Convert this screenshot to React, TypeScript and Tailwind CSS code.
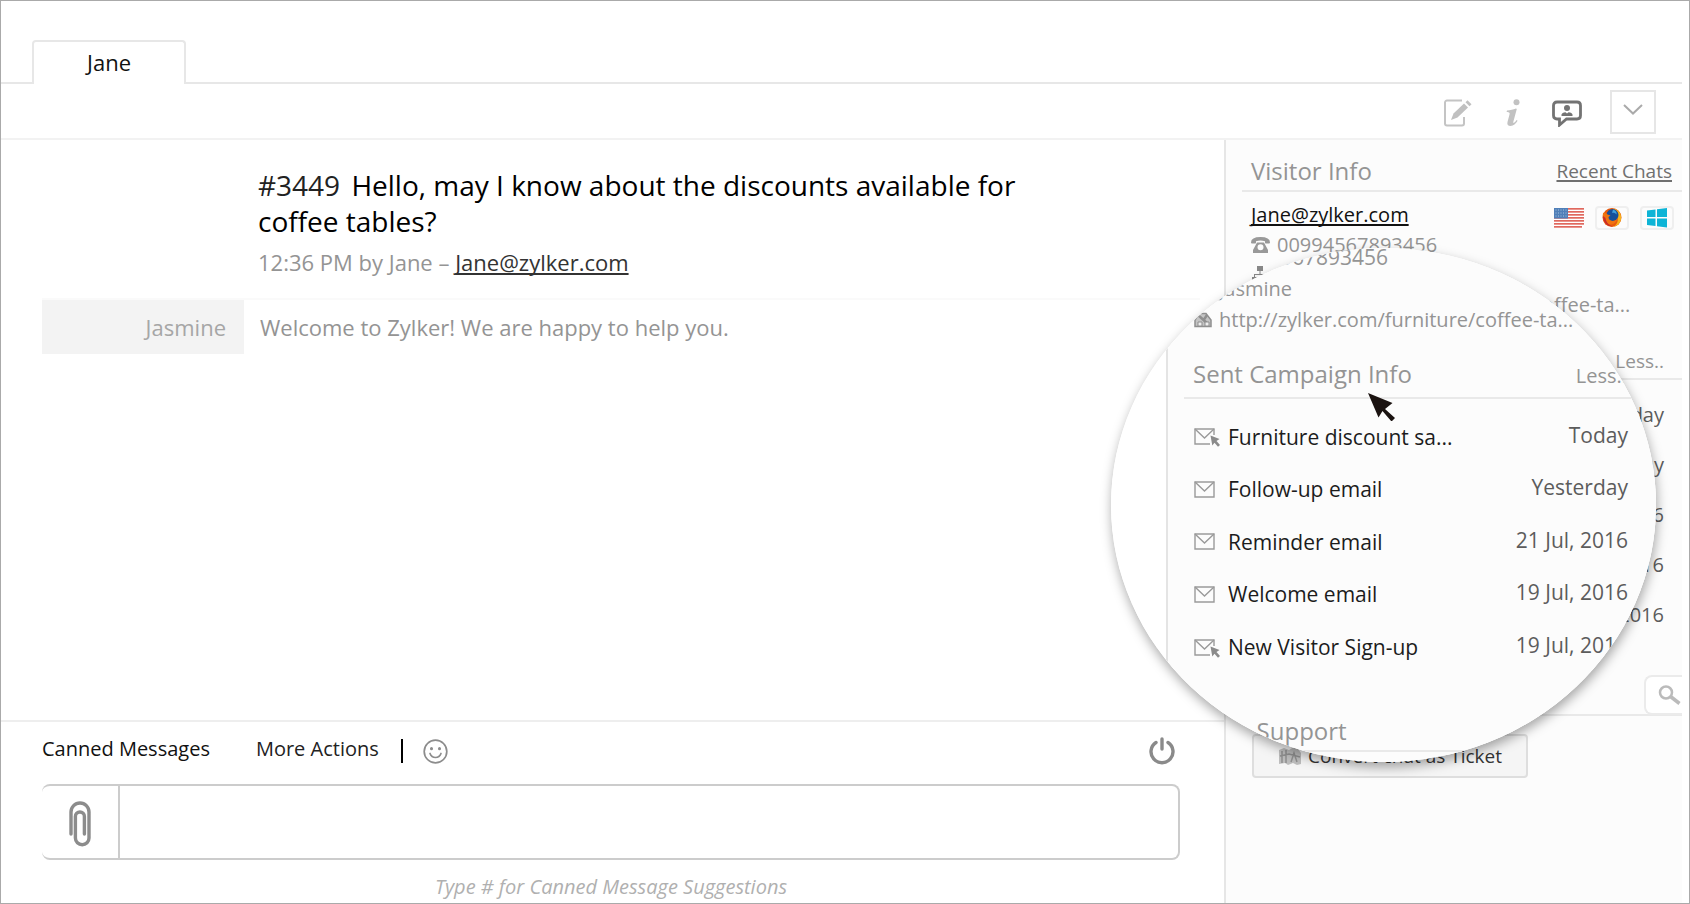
import type { ReactNode } from 'react';

const campaigns = [
    { name: 'Furniture discount sa...', date: 'Today', clicked: true },
    { name: 'Follow-up email', date: 'Yesterday', clicked: false },
    { name: 'Reminder email', date: '21 Jul, 2016', clicked: false },
    { name: 'Welcome email', date: '19 Jul, 2016', clicked: false },
    { name: 'New Visitor Sign-up', date: '19 Jul, 2016', clicked: true },
];

/* ---------- Icons ---------- */

function EditIcon() {
    return (
        <svg width="28" height="28" viewBox="0 0 28 28" fill="none">
            <path d="M18 1.5H3a2 2 0 0 0-2 2v21a2 2 0 0 0 2 2h15a2 2 0 0 0 2-2V18" stroke="#c4c4c4" strokeWidth="2" />
            <path d="M7 21l2.5-6.5L20 4.5l4 4L13.500 18.500z" fill="#c0c0c0" />
            <path d="M21.500 3.200l2-2 4 4-2 2z" fill="#c0c0c0" />
        </svg>
    );
}

function InfoIcon() {
    return (
        <svg width="16" height="28" viewBox="0 0 16 28" fill="#c2c2c2">
            <circle cx="11.500" cy="3.300" r="3" />
            <path d="M2 11.500c3.500-.3 6-1 9-2l.8.5-3.400 12.500c-.4 1.400.2 1.700 1 1.100.8-.6 1.500-1.500 2.200-2.500l1 .7C10.800 24.800 8.500 27 5.500 27c-2.400 0-3.700-1.500-3-4l2-7.500c.4-1.600.2-2.300-2.900-2.500z" />
        </svg>
    );
}

function ChatUserIcon() {
    return (
        <svg width="30" height="28" viewBox="0 0 30 28" fill="none">
            <path d="M5 3h20q3.500 0 3.500 3.500v10q0 3.500-3.500 3.500H14.500L7.500 26V20H5q-3.500 0-3.500-3.500v-10Q1.500 3 5 3z" stroke="#737373" strokeWidth="2.800" />
            <circle cx="15" cy="9" r="3" fill="#737373" />
            <path d="M9.500 17v-1.500q.5-2 4-2.300l1.500 1.400 1.500-1.400q3.500.3 4 2.300v1.500z" fill="#737373" />
        </svg>
    );
}

function PhoneIcon() {
    return (
        <svg width="19" height="16" viewBox="0 0 19 16" fill="#999">
            <path d="M0 5.500Q0 0 9.500 0T19 5.500q0 1-1 1h-3.200q-.8 0-.8-1V4.200Q9.500 2.700 5 4.200v1.300q0 1-.8 1H1q-1 0-1-1z" />
            <path fillRule="evenodd" d="M6 5.500h7l4 7.500v3H2v-3zM9.500 7.300a3 3 0 1 0 0 6 3 3 0 0 0 0-6z" />
        </svg>
    );
}

function AgentIcon() {
    return (
        <svg width="18" height="18" viewBox="0 0 18 18" fill="#888">
            <path d="M6 0h6v5H6zM8.500 5h1v3h5.500v3h-1V9H4v2H3V8h5.500zM1 11h5v5H1zM12 11h5v5h-5z" />
        </svg>
    );
}

function PageIcon() {
    return (
        <svg width="18" height="16" viewBox="0 0 18 16" fill="none" stroke="#8f8f8f">
            <path d="M1 14.500V8L5 1.500h7L17 8v6.500z" fill="#c4c4c4" strokeWidth="1.500" />
            <path d="M4 3l10 9M13 3l-4 6" strokeWidth="2.500" />
            <path d="M4 10h4v4H4zM11 10h4v4h-4z" fill="#eee" />
        </svg>
    );
}

function EnvelopeIcon({ clicked }: { clicked: boolean }) {
    return (
        <svg width="27" height="20" viewBox="0 0 27 20" fill="none">
            <path d={clicked ? 'M16 17H1V2h19v6' : 'M1 2h19v15H1z'} stroke="#9a9a9a" strokeWidth="1.400" />
            <path d="M1 2l9.500 9L20 2" stroke="#9a9a9a" strokeWidth="1.400" />
            {clicked && <path d="M16.500 8.500l9 3.500-3 2 3.500 4-2 1.800-3.500-4-2.200 2.700z" fill="#8b8b8b" />}
        </svg>
    );
}

function FlagIcon() {
    return (
        <svg width="30" height="20" viewBox="0 0 30 20">
            <rect width="30" height="20" rx="2" fill="#fff" />
            {[0, 3, 6, 9, 12, 15, 18].map((y) => (
                <rect key={y} y={y} width={y === 18 ? 28 : 30} height="1.700" fill="#e0685e" />
            ))}
            <rect width="14" height="10.500" fill="#4f7fb8" />
            {[2, 5, 8].map((y) => (
                <path key={y} d={`M1.500 ${y}h11`} stroke="#a9c3df" strokeWidth="1" strokeDasharray="1 1.500" />
            ))}
        </svg>
    );
}

function FirefoxIcon() {
    return (
        <svg width="20" height="20" viewBox="0 0 20 20">
            <circle cx="10" cy="9.500" r="9.500" fill="#e8590c" />
            <path d="M12 0.500c5 1.500 8 6 7 11-1 4.500-4.500 7-8 7.500 4-2 5.500-6 4.500-10z" fill="#f6b21b" />
            <circle cx="10.500" cy="7" r="6" fill="#14509b" />
            <path d="M11 1.500c3 1 4 3 3.500 5-1-1.500-3-2-4.500-1.500z" fill="#3fa0dd" />
            <path d="M1 5c1.500-.5 3.500 0 4.500 1.500l3 1-2 1.500c0 2.500 2 4 4.500 4 2 0 3.500-1 4-2.500-.3 4-3.500 6-6.500 6-5 0-8.500-5-7.500-11.500z" fill="#f0730f" />
            <path d="M1 8c0 6 4 10.500 9.500 10.500C6 17 4 13.500 3.500 10z" fill="#c92a2a" />
        </svg>
    );
}

function WindowsIcon() {
    return (
        <svg width="20" height="20" viewBox="0 0 20 20" fill="#0db4d6">
            <path d="M0 2.500L8.500 1.500V9H0zM10 1.200L20 0v9H10zM0 10.500h8.500V18L0 17zM10 10.500h10V19.500L10 18.200z" />
        </svg>
    );
}

function SmileyIcon() {
    return (
        <svg width="25" height="25" viewBox="0 0 25 25" fill="none" stroke="#8c8c8c" strokeLinecap="round">
            <circle cx="12.500" cy="12.500" r="11.300" strokeWidth="1.700" />
            <path d="M7 14.500q1.500 4 5.500 4t5.500-4" strokeWidth="1.700" />
            <path d="M8.500 9.500v.2M16.500 9.500v.2" strokeWidth="3" />
        </svg>
    );
}

function PowerIcon() {
    return (
        <svg width="28" height="28" viewBox="0 0 28 28" fill="none" stroke="#8a8a8a" strokeWidth="3.400" strokeLinecap="round">
            <path d="M14 2v10" />
            <path d="M8 5.500a11 11 0 1 0 12 0" />
        </svg>
    );
}

function PaperclipIcon() {
    return (
        <svg width="22" height="46" viewBox="0 0 22 46" fill="none" stroke="#8c8c8c" strokeWidth="3.400" strokeLinecap="round">
            <path d="M2 33V11a9 9 0 0 1 18 0v26a6.800 6.800 0 0 1-13.600 0V15.500a4.500 4.500 0 0 1 9 0V33" />
        </svg>
    );
}

function TicketIcon() {
    return (
        <svg width="24" height="20" viewBox="0 0 24 20">
            <path d="M1 4l5-2 5 2 5-3 4 2 3 4v11l-4 1-4-2-5 2-3-2-6 1z" fill="#bdbdbd" />
            <path d="M4 5v12M8 4v13M13 16l3-9 3 9M2 10l9-2 11 3" stroke="#8f8f8f" strokeWidth="1.500" fill="none" />
        </svg>
    );
}

/* ---------- Shared pieces ---------- */

function SectionHeader({ title, children }: { title?: string; children?: ReactNode }) {
    return (
        <div className="flex h-[52px] items-center border-b-2 border-[#e9e9e9] pl-[9px] pt-3">
            {title && <h2 className="whitespace-nowrap text-[24px] leading-8 text-[#949494]">{title}</h2>}
            {children}
        </div>
    );
}

function VisitorDetails() {
    return (
        <>
            <p className="flex items-center gap-[7px]"><PhoneIcon />00994567893456</p>
            <p className="flex items-center gap-[7px]"><AgentIcon />Jasmine</p>
            <p className="flex items-center gap-[7px] whitespace-nowrap"><PageIcon />http://zylker.com/furniture/coffee-ta...</p>
        </>
    );
}

/* Magnified part of the sidebar */
function Lens() {
    return (
        <div className="absolute right-[33px] top-[247px] flex h-[514px] w-[545px] overflow-hidden rounded-[50%] bg-white">
            <div className="ml-[55px] flex-1 border-l-2 border-[#e4e4e4] bg-[#fcfcfc] pl-4">
                <div className="-mt-[6px] pl-[10px] text-[20px] leading-[31px] text-[#949494] [&>p:first-child]:text-[21px]">
                    <VisitorDetails />
                </div>
                {/* Header sits a bit higher above its rule than in the sidebar */}
                <div className="mt-2 border-b-2 border-[#e9e9e9] pb-[7px] pl-[9px] pt-[15px]">
                    <div className="flex items-center text-[#949494]">
                        <h2 className="whitespace-nowrap text-[24px] leading-8">Sent Campaign Info</h2>
                        <a href="#less" className="ml-auto pr-[29px] pt-1 text-[20px] leading-6">Less..</a>
                    </div>
                </div>
                <ul className="mt-3 flex h-[263px] flex-col pl-[10px] pr-[28px]">
                    {campaigns.map((c) => (
                        <li key={c.name} className="flex flex-1 items-center text-[21px]">
                            <span className="w-[34px]"><EnvelopeIcon clicked={c.clicked} /></span>
                            <span className="flex-1 text-[#1c1c1c]">{c.name}</span>
                            <span className="pb-1 text-[#5c5c5c]">{c.date}</span>
                        </li>
                    ))}
                </ul>
                <div className="mt-[26px]">
                    <SectionHeader title="Zoho Support" />
                </div>
            </div>
        </div>
    );
}

function Sidebar() {
    return (
        <aside className="w-[458px] shrink-0 border-l-2 border-[#e6e6e6] bg-[#fcfcfc] pl-4">
            <SectionHeader title="Visitor Info">
                <a href="#recent" className="ml-auto pr-[10px] text-[19px] text-[#707070] underline decoration-2 underline-offset-2 [text-decoration-skip-ink:none]">Recent Chats</a>
            </SectionHeader>
            <div className="mt-2 flex items-start justify-between pl-[9px] pr-2">
                <div className="text-[20px] leading-[30px] text-[#949494]">
                    <a href="mailto:Jane@zylker.com" className="text-[#111] underline decoration-2 underline-offset-2 [text-decoration-skip-ink:none]">Jane@zylker.com</a>
                    <VisitorDetails />
                </div>
                <div className="-ml-[200px] mt-[6px] flex items-center gap-[11px]">
                    <FlagIcon />
                    <span className="flex h-6 w-[34px] items-center justify-center rounded border-2 border-[#efefef]"><FirefoxIcon /></span>
                    <span className="flex h-6 w-[34px] items-center justify-center rounded border-2 border-[#efefef]"><WindowsIcon /></span>
                </div>
            </div>
            <div className="mt-2">
                <SectionHeader>
                    <a href="#less" className="ml-auto pr-[18px] pt-1 text-[19px] text-[#949494]">Less..</a>
                </SectionHeader>
            </div>
            <ul className="mt-[10px] pr-[18px] text-right text-[20px] leading-[50px] text-[#5c5c5c]">
                {campaigns.map((c) => (
                    <li key={c.name}>{c.date}</li>
                ))}
            </ul>
            <div className="mt-6">
                <SectionHeader>
                    <button aria-label="Search" className="ml-auto flex h-10 w-[38px] items-center rounded-l-lg border-2 border-r-0 border-[#ebebeb] bg-white pl-3">
                        <svg width="24" height="20" viewBox="0 0 24 20" fill="none" stroke="#bbb">
                            <circle cx="8" cy="7.500" r="6" strokeWidth="2.500" />
                            <path d="M12.500 11.500l9 7" strokeWidth="3.500" />
                        </svg>
                    </button>
                </SectionHeader>
            </div>
            <button className="ml-[10px] mt-[18px] flex h-11 w-[276px] items-center rounded border-2 border-[#dedede] bg-[#f5f5f5] pl-6 text-[19px] text-[#333]">
                <span className="w-[30px]"><TicketIcon /></span>
                Convert chat as Ticket
            </button>
        </aside>
    );
}

function Composer() {
    return (
        <footer className="border-t-2 border-[#eee] pb-px pl-[41px] pr-[44px]">
            <div className="flex h-[62px] items-center pb-2 text-[20px] text-[#111]">
                <button>Canned Messages</button>
                <button className="ml-[46px] text-[#222]">More Actions</button>
                <div className="flex flex-1 items-center pt-1">
                    <span className="ml-[22px] mr-5 h-6 w-[2px] bg-black" />
                    <button aria-label="Insert emoji"><SmileyIcon /></button>
                    <button aria-label="End chat" className="ml-auto mr-1"><PowerIcon /></button>
                </div>
            </div>
            <div className="flex h-[76px] rounded-lg border-2 border-l-0 border-[#ccc]">
                <button aria-label="Attach file" className="flex w-[78px] items-center justify-center border-r-2 border-[#ccc] pt-1">
                    <PaperclipIcon />
                </button>
                <input aria-label="Message" className="min-w-0 flex-1 rounded-r-lg px-4 text-[20px] outline-none" />
            </div>
            <p className="mt-3 text-center text-[20px] italic leading-[30px] text-[#b0b0b0]">Type # for Canned Message Suggestions</p>
        </footer>
    );
}

export default function App() {
    return (
        <div className="relative flex min-h-screen flex-col overflow-hidden border border-[#aaa] bg-white pr-[7px] font-['Open_Sans',sans-serif]">
            {/* Tabs */}
            <nav className="flex h-[83px] items-end border-b-2 border-[#e7e7e7] pl-[31px]">
                <a href="#jane" className="-mb-[2px] flex h-11 w-[154px] items-center justify-center rounded-t border-2 border-b-0 border-[#e7e7e7] bg-white pb-[2px] text-[22px] text-[#111]">
                    Jane
                </a>
            </nav>

            {/* Toolbar */}
            <div className="flex h-14 items-center justify-end border-b-2 border-[#f2f2f2] pr-[26px] pt-[2px]">
                <button aria-label="Edit" className="pt-[2px]"><EditIcon /></button>
                <button aria-label="Info" className="ml-[33px] pt-[2px]"><InfoIcon /></button>
                <button aria-label="Visitor" className="ml-[31px] pt-[2px]"><ChatUserIcon /></button>
                <button aria-label="More" className="ml-7 flex h-11 w-[46px] items-center justify-center border-2 border-[#e6e6e6] pb-1">
                    <svg width="20" height="12" viewBox="0 0 20 12" fill="none" stroke="#aaa" strokeWidth="2">
                        <path d="M1 1l9 8.500L19 1" />
                    </svg>
                </button>
            </div>

            <div className="flex flex-1">
                <div className="flex min-w-0 flex-1 flex-col">
                    <main className="flex-1 pl-[41px] pr-6">
                        <div className="pb-[21px] pl-[216px] pt-[27px]">
                            <h1 className="max-w-[800px] text-[28px] leading-9 text-black">
                                <span className="mr-1 text-[#222]">#3449</span> Hello, may I know about the discounts available for coffee tables?
                            </h1>
                            <p className="mt-2 text-[22px] leading-[30px] text-[#949494]">
                                12:36 PM by Jane – <a href="mailto:Jane@zylker.com" className="text-[#333] underline decoration-2 underline-offset-2 [text-decoration-skip-ink:none]">Jane@zylker.com</a>
                            </p>
                        </div>
                        <div className="flex h-14 items-center border-t-2 border-[#fafafa] text-[22px] text-[#949494]">
                            <span className="flex h-full w-[202px] items-center justify-end bg-[#f3f3f3] pr-[18px] text-[#a6a6a6]">Jasmine</span>
                            <p className="pl-4">Welcome to Zylker! We are happy to help you.</p>
                        </div>
                    </main>
                    <Composer />
                </div>
                <Sidebar />
            </div>

            {/* Lens shadow lies behind the clipped content */}
            <div className="absolute right-[33px] top-[247px] h-[514px] w-[545px] rounded-[50%] shadow-[1px_5px_12px_rgba(0,0,0,0.35)]" />
            <Lens />
            <svg className="absolute right-[293px] top-[392px]" width="28" height="28" viewBox="0 0 28 28" fill="#1b1311">
                <path d="M0 0l24.500 10-7.500 6 10 9-3.500 3.500-9-10.500-4 6.500z" />
            </svg>
        </div>
    );
}
